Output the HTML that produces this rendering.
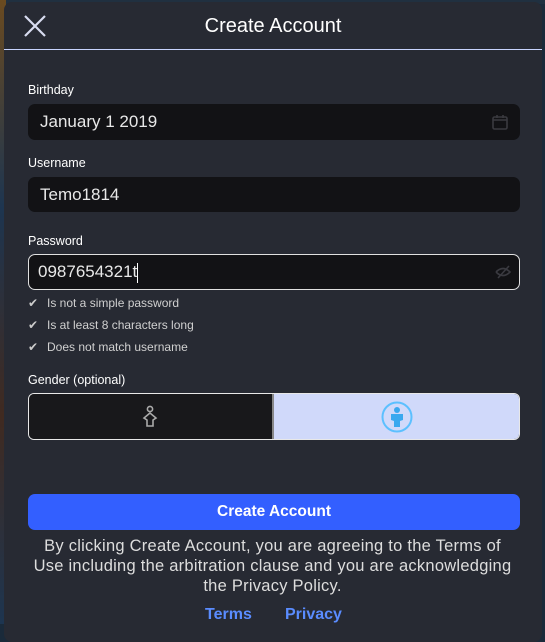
<!DOCTYPE html>
<html><head><meta charset="utf-8"><style>
*{margin:0;padding:0;box-sizing:border-box}
body{width:545px;height:624px;overflow:hidden;background:#1a2a3a;font-family:"Liberation Sans",sans-serif;position:relative}
.bgl{position:absolute;left:0;top:0;width:6px;height:624px;background:linear-gradient(#6a4a20,#1d3550,#402a20,#1d3550)}
.bgt{position:absolute;left:0;top:0;width:545px;height:4px;background:#203040}
.modal{position:absolute;left:4px;top:2px;width:538px;height:640px;background:#272a33;border-radius:8px}
.hdr{position:absolute;left:0;top:0;width:538px;height:48px;border-bottom:1px solid #c8d4ff}
.title{position:absolute;left:0;width:538px;top:13px;text-align:center;color:#fff;font-size:20px}
.x{position:absolute;left:19px;top:12px}
.lbl{position:absolute;left:28px;color:#fff;font-size:12.5px}
.inp{position:absolute;left:28px;width:492px;background:#121215;border-radius:7px;color:#e8e8e8;font-size:17px;padding-left:12px}
.chk{position:absolute;left:28px;color:#d0d0d0;font-size:12px}
.chk span{display:inline-block;width:19px;color:#ccc}
.p{position:absolute;left:0;width:545px;text-align:center;color:#ddd;font-size:16.5px;letter-spacing:0.25px;line-height:20px;white-space:nowrap}
</style></head><body>
<div class="bgt"></div><div class="bgl"></div>
<div class="modal">
<div class="hdr">
<svg class="x" width="24" height="24" viewBox="0 0 24 24"><path d="M2 2L22 22M22 2L2 22" stroke="#d8dcf0" stroke-width="2.2"/></svg>
<div class="title">Create Account</div>
</div>
</div>
<div class="lbl" style="top:83px">Birthday</div>
<div class="inp" style="top:104px;height:36px;line-height:36px">January 1 2019
<svg style="position:absolute;right:12px;top:10px" width="16" height="16" viewBox="0 0 16 16"><rect x="1" y="3" width="14" height="12" rx="1.5" fill="none" stroke="#3a3a40" stroke-width="1.6"/><path d="M1 6h14M5 1v3M11 1v3" stroke="#3a3a40" stroke-width="1.6"/></svg></div>
<div class="lbl" style="top:156px">Username</div>
<div class="inp" style="top:177px;height:35px;line-height:35px">Temo1814</div>
<div class="lbl" style="top:234px">Password</div>
<div class="inp" style="top:254px;height:36px;line-height:34px;border:1px solid #e0e0e0;padding-left:9px">0987654321t<span style="display:inline-block;width:1px;height:20px;background:#fff;vertical-align:middle"></span>
<svg style="position:absolute;right:8px;top:10px" width="16" height="14" viewBox="0 0 16 14"><path d="M1 7Q8 0 15 7Q8 14 1 7M3 13L14 1" stroke="#3a3a40" stroke-width="1.6" fill="none"/></svg></div>
<div class="chk" style="top:296px"><span>✔</span>Is not a simple password</div>
<div class="chk" style="top:318px"><span>✔</span>Is at least 8 characters long</div>
<div class="chk" style="top:340px"><span>✔</span>Does not match username</div>
<div class="lbl" style="top:373px">Gender (optional)</div>
<div style="position:absolute;left:28px;top:393px;width:492px;height:47px;border:1px solid #e8e8e8;border-radius:6px;overflow:hidden;display:flex">
<div style="width:245px;background:#18181b;position:relative;border-right:2px solid #888">
<svg style="position:absolute;left:113px;top:11px" width="16" height="24" viewBox="0 0 16 24"><circle cx="8" cy="4" r="2.6" fill="none" stroke="#aaa" stroke-width="1.6"/><path d="M8 8L2 13L5 15V21H11V15L14 13Z" fill="none" stroke="#aaa" stroke-width="1.6"/></svg></div>
<div style="flex:1;background:#d0d9fa;position:relative">
<svg style="position:absolute;left:107px;top:7px" width="32" height="32" viewBox="0 0 32 32"><circle cx="16" cy="16" r="14.5" fill="none" stroke="#5cc0ff" stroke-width="2"/><circle cx="16" cy="9" r="3" fill="#3aa8ef"/><path d="M10 13H22V19L19 20V26H13V20L10 19Z" fill="#3aa8ef"/></svg></div>
</div>
<div style="position:absolute;left:28px;top:494px;width:492px;height:36px;background:#335fff;border-radius:7px;color:#fff;font-weight:bold;font-size:15.5px;text-align:center;line-height:36px">Create Account</div>
<div class="p" style="top:536px">By clicking Create Account, you are agreeing to the Terms of<br>Use including the arbitration clause and you are acknowledging<br>the Privacy Policy.</div>
<div style="position:absolute;left:205px;top:606px;color:#5a8cff;font-weight:bold;font-size:16px">Terms</div>
<div style="position:absolute;left:285px;top:606px;color:#5a8cff;font-weight:bold;font-size:16px">Privacy</div>
</body></html>
